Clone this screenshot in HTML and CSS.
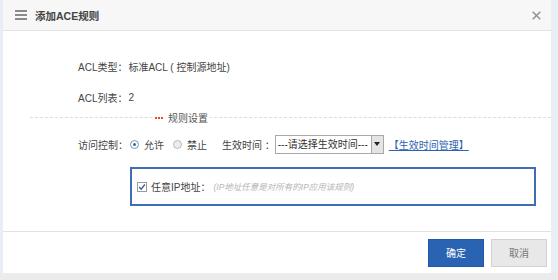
FILE: index.html
```html
<!DOCTYPE html>
<html>
<head>
<meta charset="utf-8">
<link rel="stylesheet" href="styles.css">
</head>
<body>
<div class="page">
  <div class="dialog">
    <div class="header">
      <svg class="menu-icon" width="12" height="10" viewBox="0 0 12 10"><rect x="0" y="0" width="12" height="2" fill="#8a8a8a"/><rect x="0" y="4" width="12" height="2" fill="#8a8a8a"/><rect x="0" y="8" width="12" height="2" fill="#8a8a8a"/></svg>
      <span class="title">添加ACE规则</span>
      <svg class="close" width="9" height="9" viewBox="0 0 9 9"><path d="M0.7 0.7L8.3 8.3M8.3 0.7L0.7 8.3" stroke="#8a8a8a" stroke-width="1.3"/></svg>
    </div>
    <div class="body">
      <div class="row r1"><span>ACL类型：</span><span class="val">标准ACL ( 控制源地址)</span></div>
      <div class="row r2"><span>ACL列表：</span><span class="val">2</span></div>
      <div class="divider"><span class="legend"><span class="dots"><i></i><i></i><i></i></span>规则设置</span></div>
      <div class="row r3">
        <span>访问控制：</span>
        <span class="radio on"></span><span class="opt">允许</span>
        <span class="radio"></span><span class="opt">禁止</span>
        <span class="lbl">生效时间 ：</span>
        <span class="select"><span class="sel-text">---请选择生效时间---</span><span class="sel-btn"><svg width="6" height="4" viewBox="0 0 6 4"><path d="M0 0H6L3 4Z" fill="#222"/></svg></span></span>
        <a class="link">【生效时间管理】</a>
      </div>
      <div class="ipbox">
        <span class="check"><svg width="8" height="8" viewBox="0 0 8 8"><path d="M1.2 4L3.2 6.2L6.8 1.5" stroke="#2d5fa8" stroke-width="1.3" fill="none"/></svg></span>
        <span class="iplabel">任意IP地址：</span>
        <span class="hint">(IP地址任意是对所有的IP应用该规则)</span>
      </div>
    </div>
    <div class="footer">
      <button class="btn ok">确定</button>
      <button class="btn cancel">取消</button>
    </div>
  </div>
</div>
</body>
</html>
```
FILE: styles.css
```css
html, body { margin: 0; padding: 0; }
body {
  width: 558px; height: 280px; overflow: hidden;
  background: #ebebeb;
  font-family: "Liberation Sans", "Noto Sans CJK SC", sans-serif;
  font-size: 10px; color: #444;
}
.page {
  height: 273px;
  background: #e9eef5;
  padding: 0 6px 0 3px;
}
.dialog {
  background: #fff;
  height: 273px;
  width: 548px;
  display: flex; flex-direction: column;
}
.header {
  height: 31px;
  background: #f7f7f7;
  border-bottom: 1px solid #e2e2e2;
  display: flex; align-items: center;
  padding: 0 10px 0 12px;
  box-sizing: border-box;
}
.menu-icon { margin-right: 8px; }
.title { font-size: 10.5px; color: #444; font-weight: bold; flex: 1; }
.close { margin-right: 0px; }
.body { flex: 1; position: relative; padding-top: 27px; }
.row { display: flex; align-items: center; padding-left: 75px; height: 16px; }
.val { margin-left: 1px; }
.r2 { margin-top: 15px; }
.divider {
  margin: 12px 0 0 27px;
  border-top: 1px dashed #dcdcdc;
  height: 0; position: relative;
}
.legend {
  position: absolute; left: 123px; top: -8px;
  background: #fff; padding: 0 2px; color: #555;
  display: flex; align-items: center;
}
.dots { display: inline-flex; gap: 1px; margin-right: 5px; }
.dots i { width: 2px; height: 2px; background: #e8481e; display: block; }
.r3 { margin-top: 16px; height: 20px; }
.radio {
  width: 7px; height: 7px; border-radius: 50%;
  border: 1px solid #bbb; background: #ececec;
  margin: 0 5px 0 2px; box-sizing: content-box;
  position: relative;
}
.radio.on { border-color: #7d93ad; background: #fff; }
.radio.on::after {
  content: ""; position: absolute; left: 2px; top: 2px;
  width: 3px; height: 3px; border-radius: 50%; background: #2d6db3;
}
.opt { margin-right: 7px; }
.lbl { margin-left: 8px; margin-right: 0; }
.select {
  display: inline-flex; align-items: stretch;
  width: 109px; height: 19px; border: 1px solid #a9a9a9;
  box-sizing: border-box; background: #fff;
}
.sel-text { flex: 1; padding-left: 2px; line-height: 17px; color: #333; white-space: nowrap; overflow: hidden; }
.sel-btn {
  width: 11px; background: #e4e4e4; border-left: 1px solid #a9a9a9;
  display: flex; align-items: center; justify-content: center;
}
.link { color: #2d62b0; text-decoration: underline; margin-left: 5px; }
.ipbox {
  margin: 13px 0 0 127px;
  width: 406px; height: 39px;
  border: 2px solid #3d6eb5;
  box-sizing: border-box;
  display: flex; align-items: flex-start;
  padding: 10px 0 0 5px;
}
.check {
  width: 8px; height: 8px; border: 1px solid #9a9a9a; background: #fff;
  display: flex; align-items: center; justify-content: center; margin-top: 3px;
}
.iplabel { margin-left: 4px; font-size: 10px; color: #444; }
.hint { margin-left: 3px; font-size: 8.5px; color: #b5b5b5; font-style: italic; margin-top: 1px; }
.footer {
  height: 41px;
  border-top: 1px solid #e2e2e2;
  display: flex; justify-content: flex-end; align-items: center;
  padding-right: 4px; gap: 7px;
}
.btn {
  width: 56px; height: 28px; font-family: inherit; font-size: 10px;
  box-sizing: border-box; padding: 0;
}
.ok { background: #2a63b1; color: #fff; border: 1px solid #1f58a6; }
.cancel { background: #e8e8e8; color: #777; border: 1px solid #d2d2d2; }
```
